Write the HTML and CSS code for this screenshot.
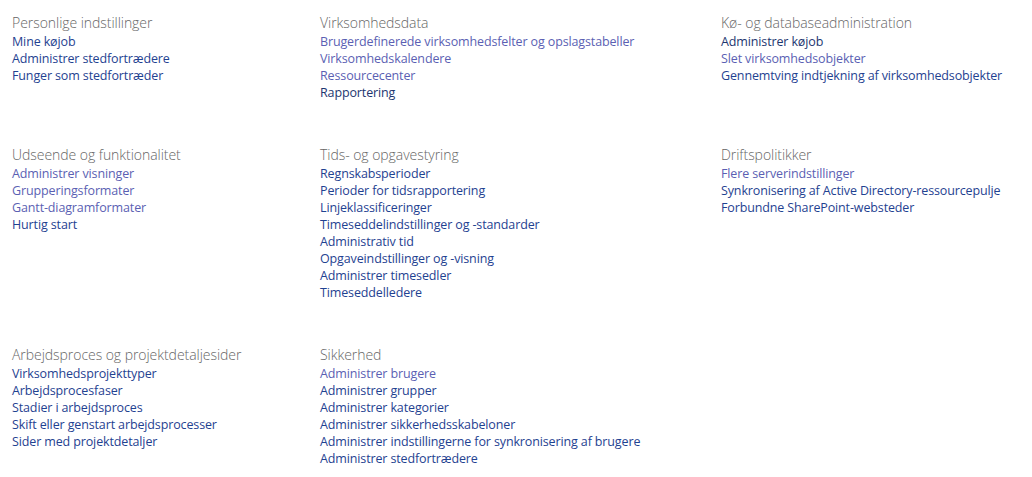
FILE: index.html
```html
<!DOCTYPE html>
<html lang="da">
<head>
    <meta charset="UTF-8">
    <meta name="viewport" content="width=device-width, initial-scale=1.0">
    <title>PWA-indstillinger</title>
    <link rel="stylesheet" href="styles.css">
</head>
<body>
    <div class="settings">
        <div class="group">
            <h2>Personlige indstillinger</h2>
            <a href="#">Mine køjob</a>
            <a href="#">Administrer stedfortrædere</a>
            <a href="#">Funger som stedfortræder</a>
        </div>
        <div class="group">
            <h2>Virksomhedsdata</h2>
            <a href="#" class="visited">Brugerdefinerede virksomhedsfelter og opslagstabeller</a>
            <a href="#" class="visited">Virksomhedskalendere</a>
            <a href="#" class="visited">Ressourcecenter</a>
            <a href="#" class="dark">Rapportering</a>
        </div>
        <div class="group">
            <h2>Kø- og databaseadministration</h2>
            <a href="#" class="dark">Administrer køjob</a>
            <a href="#" class="visited">Slet virksomhedsobjekter</a>
            <a href="#">Gennemtving indtjekning af virksomhedsobjekter</a>
        </div>

        <div class="group">
            <h2>Udseende og funktionalitet</h2>
            <a href="#" class="visited">Administrer visninger</a>
            <a href="#" class="visited">Grupperingsformater</a>
            <a href="#" class="visited">Gantt-diagramformater</a>
            <a href="#">Hurtig start</a>
        </div>
        <div class="group">
            <h2>Tids- og opgavestyring</h2>
            <a href="#">Regnskabsperioder</a>
            <a href="#">Perioder for tidsrapportering</a>
            <a href="#">Linjeklassificeringer</a>
            <a href="#">Timeseddelindstillinger og -standarder</a>
            <a href="#">Administrativ tid</a>
            <a href="#">Opgaveindstillinger og -visning</a>
            <a href="#">Administrer timesedler</a>
            <a href="#">Timeseddelledere</a>
        </div>
        <div class="group">
            <h2>Driftspolitikker</h2>
            <a href="#" class="visited">Flere serverindstillinger</a>
            <a href="#">Synkronisering af Active Directory-ressourcepulje</a>
            <a href="#">Forbundne SharePoint-websteder</a>
        </div>

        <div class="group">
            <h2>Arbejdsproces og projektdetaljesider</h2>
            <a href="#">Virksomhedsprojekttyper</a>
            <a href="#">Arbejdsprocesfaser</a>
            <a href="#">Stadier i arbejdsproces</a>
            <a href="#">Skift eller genstart arbejdsprocesser</a>
            <a href="#">Sider med projektdetaljer</a>
        </div>
        <div class="group">
            <h2>Sikkerhed</h2>
            <a href="#" class="visited">Administrer brugere</a>
            <a href="#">Administrer grupper</a>
            <a href="#">Administrer kategorier</a>
            <a href="#">Administrer sikkerhedsskabeloner</a>
            <a href="#">Administrer indstillingerne for synkronisering af brugere</a>
            <a href="#">Administrer stedfortrædere</a>
        </div>
    </div>
</body>
</html>
```

FILE: styles.css
```css
body {
    margin: 0;
    padding: 12px 12px 0 12px;
    background-color: #ffffff;
    font-family: "Segoe UI", "Open Sans", "Noto Sans", sans-serif;
}
.settings {
    display: grid;
    grid-template-columns: 308px 401px auto;
    row-gap: 43px;
}
.group {
    display: flex;
    flex-direction: column;
    align-items: flex-start;
}
.group h2 {
    margin: 0;
    font-size: 14px;
    font-weight: 300;
    line-height: 21px;
    letter-spacing: -0.05px;
    color: #666666;
}
.group a {
    font-size: 12.5px;
    line-height: 17px;
    letter-spacing: -0.13px;
    color: #1f4291;
    text-decoration: none;
}
.group a.dark {
    color: #1d3670;
}
.group a.visited {
    color: #5b5fb3;
}
.group a:hover {
    text-decoration: underline;
}
```
